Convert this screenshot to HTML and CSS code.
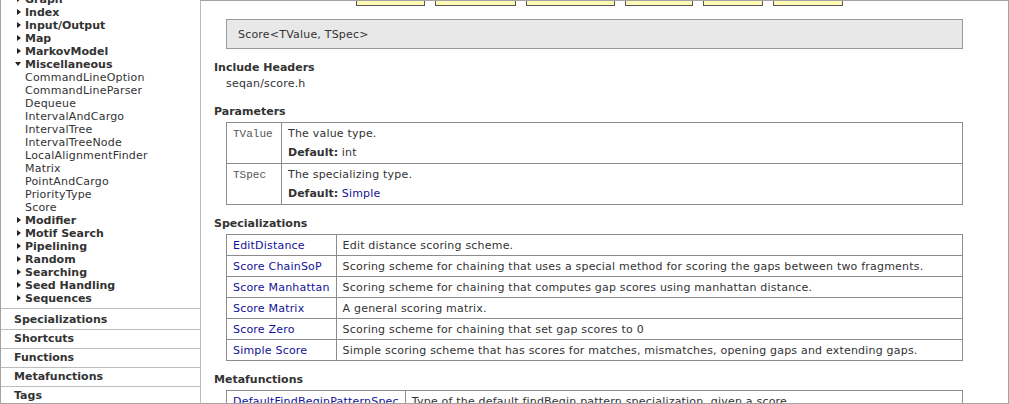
FILE: index.html
```html
<!DOCTYPE html>
<html>
<head>
<meta charset="utf-8">
<title>Score</title>
<link rel="stylesheet" href="styles.css">
</head>
<body>
<div class="page">
  <nav class="sidebar">
    <ul class="tree">
      <li class="cat closed"><span class="tw"></span>Graph</li>
      <li class="cat closed"><span class="tw"></span>Index</li>
      <li class="cat closed"><span class="tw"></span>Input/Output</li>
      <li class="cat closed"><span class="tw"></span>Map</li>
      <li class="cat closed"><span class="tw"></span>MarkovModel</li>
      <li class="cat open"><span class="tw"></span>Miscellaneous
        <ul class="leaves">
          <li>CommandLineOption</li>
          <li>CommandLineParser</li>
          <li>Dequeue</li>
          <li>IntervalAndCargo</li>
          <li>IntervalTree</li>
          <li>IntervalTreeNode</li>
          <li>LocalAlignmentFinder</li>
          <li>Matrix</li>
          <li>PointAndCargo</li>
          <li>PriorityType</li>
          <li>Score</li>
        </ul>
      </li>
      <li class="cat closed"><span class="tw"></span>Modifier</li>
      <li class="cat closed"><span class="tw"></span>Motif Search</li>
      <li class="cat closed"><span class="tw"></span>Pipelining</li>
      <li class="cat closed"><span class="tw"></span>Random</li>
      <li class="cat closed"><span class="tw"></span>Searching</li>
      <li class="cat closed"><span class="tw"></span>Seed Handling</li>
      <li class="cat closed"><span class="tw"></span>Sequences</li>
    </ul>
    <ul class="sections">
      <li>Specializations</li>
      <li>Shortcuts</li>
      <li>Functions</li>
      <li>Metafunctions</li>
      <li>Tags</li>
    </ul>
  </nav>
  <main class="main">
    <div class="tabs">
      <span class="tab"></span><span class="tab"></span><span class="tab"></span><span class="tab"></span><span class="tab"></span><span class="tab"></span>
    </div>
    <div class="sig">Score&lt;TValue, TSpec&gt;</div>

    <h3>Include Headers</h3>
    <p class="inc">seqan/score.h</p>

    <h3>Parameters</h3>
    <table class="tbl params">
      <tr>
        <td class="name mono">TValue</td>
        <td class="desc">The value type.<div class="def"><b>Default:</b> int</div></td>
      </tr>
      <tr>
        <td class="name mono">TSpec</td>
        <td class="desc">The specializing type.<div class="def"><b>Default:</b> <a href="#">Simple</a></div></td>
      </tr>
    </table>

    <h3>Specializations</h3>
    <table class="tbl specs">
      <tr><td class="name"><a href="#">EditDistance</a></td><td>Edit distance scoring scheme.</td></tr>
      <tr><td class="name"><a href="#">Score ChainSoP</a></td><td>Scoring scheme for chaining that uses a special method for scoring the gaps between two fragments.</td></tr>
      <tr><td class="name"><a href="#">Score Manhattan</a></td><td>Scoring scheme for chaining that computes gap scores using manhattan distance.</td></tr>
      <tr><td class="name"><a href="#">Score Matrix</a></td><td>A general scoring matrix.</td></tr>
      <tr><td class="name"><a href="#">Score Zero</a></td><td>Scoring scheme for chaining that set gap scores to 0</td></tr>
      <tr><td class="name"><a href="#">Simple Score</a></td><td>Simple scoring scheme that has scores for matches, mismatches, opening gaps and extending gaps.</td></tr>
    </table>

    <h3>Metafunctions</h3>
    <table class="tbl metas">
      <tr><td class="name"><a href="#">DefaultFindBeginPatternSpec</a></td><td>Type of the default findBegin pattern specialization, given a score.</td></tr>
    </table>
  </main>
</div>
</body>
</html>
```
FILE: styles.css
```css
html, body {
  margin: 0;
  padding: 0;
  background: #fff;
}

body {
  font-family: "DejaVu Sans", Verdana, sans-serif;
  font-size: 11px;
  letter-spacing: 0.2px;
  color: #333;
}

b, h3, .cat, .sections li {
  letter-spacing: 0;
}

.page {
  display: flex;
  width: 1009px;
  height: 404px;
  overflow: hidden;
}

/* ---------- sidebar ---------- */
.sidebar {
  width: 200px;
  flex: none;
  box-sizing: border-box;
  border-left: 1px solid #a3a3a3;
  border-bottom: 1px solid #a3a3a3;
  overflow: hidden;
}

.tree {
  list-style: none;
  margin: -7px 0 0;
  padding: 0;
}

.cat {
  font-weight: bold;
  line-height: 13px;
  padding-left: 13px;
  color: #333;
}

.tw {
  display: inline-block;
  width: 11px;
  height: 13px;
  vertical-align: top;
}

.tw::before {
  content: "";
  display: block;
  width: 0;
  height: 0;
}

.closed .tw::before {
  margin: 3px 0 0 3px;
  border-left: 4px solid #222;
  border-top: 3.5px solid transparent;
  border-bottom: 3.5px solid transparent;
}

.open .tw::before {
  margin: 4px 0 0 1px;
  border-top: 4px solid #222;
  border-left: 3.5px solid transparent;
  border-right: 3.5px solid transparent;
}

.leaves {
  list-style: none;
  margin: 0;
  padding: 0;
  font-weight: normal;
  letter-spacing: 0.2px;
}

.leaves li {
  padding-left: 11px;
  line-height: 13px;
  color: #333;
}

.sections {
  list-style: none;
  margin: 3px 0 0;
  padding: 0;
}

.sections li {
  border-top: 1px solid #bdbdbd;
  padding: 2px 0 3px 13px;
  line-height: 13px;
  font-weight: bold;
  color: #333;
}

.sections li:first-child {
  padding-top: 4px;
}

/* ---------- main ---------- */
.main {
  flex: 1;
  box-sizing: border-box;
  border: 1px solid #a3a3a3;
  border-left-color: #bcbcbc;
  padding: 0 45px 0 13px;
  overflow: hidden;
}

.tabs {
  display: flex;
  gap: 10px;
  height: 6px;
  margin: -1px 0 0 142px;
}

.tab {
  box-sizing: border-box;
  height: 6px;
  background: #fff9b6;
  border: 1px solid #555;
  border-top: none;
}

.tab:nth-child(1) { width: 69px; }
.tab:nth-child(2) { width: 81px; }
.tab:nth-child(3) { width: 89px; }
.tab:nth-child(4) { width: 68px; }
.tab:nth-child(5) { width: 60px; }
.tab:nth-child(6) { width: 70px; }

.sig {
  margin: 13px 0 0 12px;
  background: #e8e8e8;
  border: 1px solid #9a9a9a;
  padding: 8px 11px 6px;
  line-height: 14px;
}

h3 {
  font-size: 11px;
  font-weight: bold;
  line-height: 14px;
  margin: 11px 0 0;
  padding-top: 1px;
  color: #333;
}

.inc {
  margin: 2px 0 0 12px;
  line-height: 14px;
}

.inc + h3 {
  margin-top: 13px;
}

a {
  color: #12129a;
  text-decoration: none;
}

.tbl {
  border-collapse: collapse;
  margin: 3px 0 0 12px;
  width: 737px;
}

.tbl td {
  border: 1px solid #8c8c8c;
  padding: 4px 6px 2px;
  line-height: 14px;
  vertical-align: top;
  text-align: left;
}

.tbl .name {
  white-space: nowrap;
}

.params td {
  padding-bottom: 3px;
}

.params .name { width: 42px; }
.specs .name { width: 96px; }
.metas .name { width: 164px; }

.mono {
  font-family: "Liberation Mono", "Courier New", monospace;
  font-size: 11px;
  letter-spacing: 0;
  color: #555;
}

.def {
  margin-top: 5px;
}

.def b {
  font-weight: bold;
}
```
